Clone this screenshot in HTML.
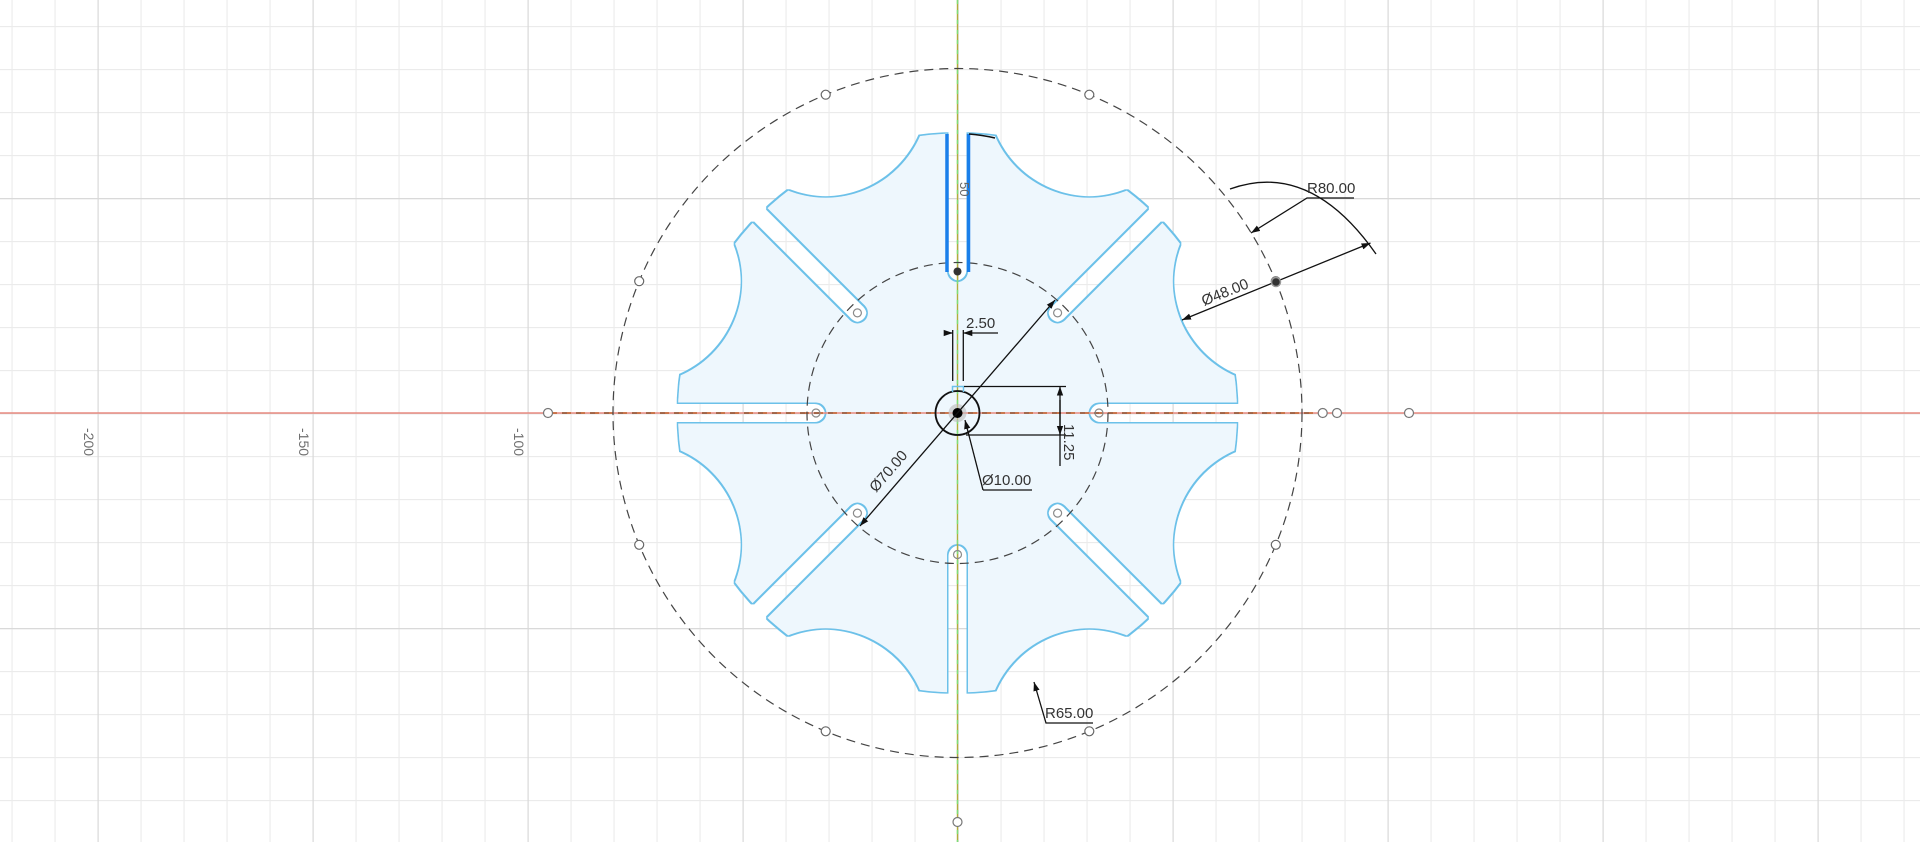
<!DOCTYPE html>
<html><head><meta charset="utf-8"><style>
html,body{margin:0;padding:0;background:#fff;width:1920px;height:842px;overflow:hidden}
svg{display:block}
text{font-family:"Liberation Sans",sans-serif}
</style></head><body>
<svg width="1920" height="842" viewBox="0 0 1920 842" xmlns="http://www.w3.org/2000/svg">
<defs>
<pattern id="gmin" patternUnits="userSpaceOnUse" x="11.5" y="26" width="43" height="43">
<path d="M0.5 0V43M0 0.5H43" stroke="#ebebeb" stroke-width="1.2" fill="none"/>
</pattern>
<pattern id="gmaj" patternUnits="userSpaceOnUse" x="97.5" y="198" width="215" height="215">
<path d="M0.5 0V215M0 0.5H215" stroke="#d9d9d9" stroke-width="1.4" fill="none"/>
</pattern>
<g id="cut">
<circle cx="318.3" cy="-131.8" r="103" fill="#000"/>
<rect x="141.5" y="-10.5" width="170" height="21" fill="#000"/>
<circle cx="141.5" cy="0" r="10.5" fill="#000"/>
</g>
<mask id="m" maskUnits="userSpaceOnUse" x="0" y="0" width="1920" height="842">
<rect width="1920" height="842" fill="#fff"/>
<g transform="translate(957.5 413)">
<use href="#cut"/>
<use href="#cut" transform="rotate(-45)"/>
<use href="#cut" transform="rotate(-90)"/>
<use href="#cut" transform="rotate(-135)"/>
<use href="#cut" transform="rotate(-180)"/>
<use href="#cut" transform="rotate(-225)"/>
<use href="#cut" transform="rotate(-270)"/>
<use href="#cut" transform="rotate(-315)"/>
</g>
</mask>
<filter id="ol" filterUnits="userSpaceOnUse" x="600" y="80" width="720" height="680">
<feMorphology in="SourceAlpha" operator="dilate" radius="1.4" result="d"/>
<feComposite in="d" in2="SourceAlpha" operator="out" result="ring"/>
<feFlood flood-color="#6cc1e9"/>
<feComposite in2="ring" operator="in" result="r2"/>
<feMerge><feMergeNode in="SourceGraphic"/><feMergeNode in="r2"/></feMerge>
</filter>
<marker id="ar" viewBox="0 0 10 10" refX="10" refY="5" markerWidth="9" markerHeight="9" orient="auto-start-reverse" markerUnits="userSpaceOnUse">
<path d="M0 1.5L10 5L0 8.5z" fill="#111"/>
</marker>
</defs>

<rect width="1920" height="842" fill="#fff"/>
<rect width="1920" height="842" fill="url(#gmin)"/>
<rect width="1920" height="842" fill="url(#gmaj)"/>

<g fill="#707070" font-size="14">
<text transform="translate(84 428) rotate(90)">-200</text>
<text transform="translate(299 428) rotate(90)">-150</text>
<text transform="translate(514 428) rotate(90)">-100</text>
<text transform="translate(729 428) rotate(90)">-50</text>
</g>

<g filter="url(#ol)">
<circle cx="957.5" cy="413" r="279.5" fill="#eef7fd" mask="url(#m)"/>
</g>

<line x1="0" y1="413" x2="1920" y2="413" stroke="#e88a80" stroke-width="1.5"/>
<line x1="548" y1="413" x2="1322" y2="413" stroke="#c0602a" stroke-width="1.6" stroke-dasharray="9 5"/>
<line x1="548" y1="413" x2="1322" y2="413" stroke="#222" stroke-width="0.6" stroke-dasharray="5 9"/>
<line x1="957.5" y1="0" x2="957.5" y2="842" stroke="#b3ad3c" stroke-width="1.4"/>
<line x1="957.5" y1="0" x2="957.5" y2="842" stroke="#7be07b" stroke-width="1.4" stroke-dasharray="4 6"/>

<circle cx="957.5" cy="413" r="344.5" fill="none" stroke="#444" stroke-width="1.2" stroke-dasharray="9 6"/>
<circle cx="957.5" cy="413" r="150.5" fill="none" stroke="#444" stroke-width="1.2" stroke-dasharray="9 6"/>

<g transform="translate(957.5 413)" fill="none" stroke="#8a8a8a" stroke-width="1.2">
<circle cx="141.5" cy="0" r="4"/>
<circle cx="100.1" cy="-100.1" r="4"/>
<circle cx="-100.1" cy="-100.1" r="4"/>
<circle cx="-141.5" cy="0" r="4"/>
<circle cx="-100.1" cy="100.1" r="4"/>
<circle cx="100.1" cy="100.1" r="4"/>
<circle cx="0" cy="141.5" r="4"/>
</g>
<circle cx="957.5" cy="271.5" r="4" fill="#333"/>

<g transform="translate(957.5 413)" fill="#fff" stroke="#666" stroke-width="1.2">
<circle cx="318.3" cy="-131.8" r="4.5"/>
<circle cx="131.8" cy="-318.3" r="4.5"/>
<circle cx="-131.8" cy="-318.3" r="4.5"/>
<circle cx="-318.3" cy="-131.8" r="4.5"/>
<circle cx="-318.3" cy="131.8" r="4.5"/>
<circle cx="-131.8" cy="318.3" r="4.5"/>
<circle cx="131.8" cy="318.3" r="4.5"/>
<circle cx="318.3" cy="131.8" r="4.5"/>
</g>
<g fill="#fff" stroke="#777" stroke-width="1.2">
<circle cx="548" cy="413" r="4.5"/>
<circle cx="1322.7" cy="413" r="4.5"/>
<circle cx="1337" cy="413" r="4.5"/>
<circle cx="1409" cy="413" r="4.5"/>
<circle cx="957.5" cy="822" r="4.5"/>
</g>

<line x1="947" y1="134" x2="947" y2="272" stroke="#1a7fea" stroke-width="3.5"/>
<line x1="968.5" y1="134" x2="968.5" y2="272" stroke="#1a7fea" stroke-width="3.5"/>
<path d="M969 134 Q982 135 995 138" stroke="#111" stroke-width="1.6" fill="none"/>
<text transform="translate(960 182) rotate(90)" fill="#666" font-size="13">50</text>

<circle cx="957.5" cy="413" r="22" fill="none" stroke="#111" stroke-width="1.8"/>
<circle cx="957.5" cy="413" r="9" fill="#bbb" opacity="0.6"/>
<circle cx="957.5" cy="413" r="5" fill="#000"/>
<path d="M952.5 392V386.5H963.5V392" stroke="#6cc1e9" stroke-width="1.5" fill="none"/>

<g stroke="#111" stroke-width="1.3" fill="none">
<line x1="860" y1="526" x2="1055" y2="300" marker-start="url(#ar)" marker-end="url(#ar)"/>
<line x1="952.7" y1="330" x2="952.7" y2="381"/>
<line x1="963.3" y1="330" x2="963.3" y2="381"/>
<line x1="945" y1="333" x2="952.7" y2="333" marker-end="url(#ar)"/>
<line x1="998" y1="333" x2="963.3" y2="333" marker-end="url(#ar)"/>
<line x1="964" y1="386.5" x2="1066" y2="386.5"/>
<line x1="966" y1="435" x2="1066" y2="435"/>
<line x1="1060" y1="466" x2="1060" y2="386.5" marker-end="url(#ar)"/>
<line x1="1060" y1="400" x2="1060" y2="435" marker-end="url(#ar)"/>
<path d="M983 490L965 420" marker-end="url(#ar)"/>
<line x1="983" y1="490" x2="1032" y2="490"/>
<path d="M1230 189 Q1310 160 1376 254"/>
<path d="M1354 198H1307L1251 233" marker-end="url(#ar)"/>
<line x1="1182" y1="320" x2="1370.5" y2="243" marker-start="url(#ar)" marker-end="url(#ar)"/>
<path d="M1093 723H1046L1034 682" marker-end="url(#ar)"/>
</g>
<circle cx="1276" cy="282" r="4.5" fill="#333" stroke="#999" stroke-width="1.5"/>

<g fill="#333" font-size="15">
<text x="966" y="328">2.50</text>
<text x="982" y="485">Ø10.00</text>
<text transform="translate(1064 424) rotate(90)">11.25</text>
<text x="1307" y="193">R80.00</text>
<text transform="translate(1204 306) rotate(-22)">Ø48.00</text>
<text x="1045" y="718">R65.00</text>
<text transform="translate(876 493) rotate(-49)">Ø70.00</text>
</g>
</svg>
</body></html>
